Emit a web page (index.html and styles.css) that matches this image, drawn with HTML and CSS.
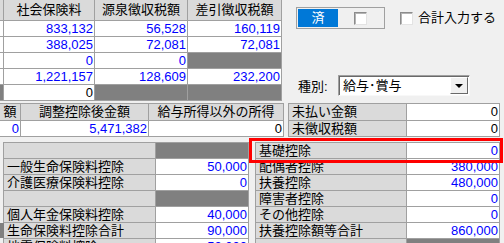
FILE: index.html
```html
<!DOCTYPE html>
<html lang="ja">
<head>
    <meta charset="UTF-8">
    <meta name="viewport" content="width=device-width, initial-scale=1.0">
    <title>源泉徴収</title>
    <link rel="stylesheet" href="styles.css">
</head>
<body>
    <div class="band">
        <div class="grid grid-tax">
            <div class="cell head"></div>
            <div class="cell head">社会保険料</div>
            <div class="cell head">源泉徴収税額</div>
            <div class="cell head">差引徴収税額</div>

            <div class="cell"></div>
            <div class="cell num">833,132</div>
            <div class="cell num">56,528</div>
            <div class="cell num">160,119</div>

            <div class="cell"></div>
            <div class="cell num">388,025</div>
            <div class="cell num">72,081</div>
            <div class="cell num">72,081</div>

            <div class="cell"></div>
            <div class="cell num">0</div>
            <div class="cell num">0</div>
            <div class="cell dark"></div>

            <div class="cell"></div>
            <div class="cell num">1,221,157</div>
            <div class="cell num">128,609</div>
            <div class="cell num">232,200</div>

            <div class="cell dark"></div>
            <div class="cell num black">0</div>
            <div class="cell dark"></div>
            <div class="cell dark"></div>
        </div>

        <div class="side">
            <div class="side-top">
                <div class="toggle">
                    <span class="toggle-on">済</span>
                    <span class="toggle-off"><span class="check"></span></span>
                </div>
                <label class="check-label"><span class="check"></span>合計入力する</label>
            </div>
            <div class="kind-row">
                <span class="kind-label">種別:</span>
                <div class="combo">
                    <span class="combo-text">給与･賞与</span>
                    <span class="combo-btn"><span class="arrow"></span></span>
                </div>
            </div>
        </div>
    </div>

    <div class="band band-mid">
        <div class="grid grid-adjust">
            <div class="cell head">額</div>
            <div class="cell head">調整控除後金額</div>
            <div class="cell head">給与所得以外の所得</div>

            <div class="cell num">0</div>
            <div class="cell num">5,471,382</div>
            <div class="cell num black">0</div>
        </div>

        <div class="grid grid-unpaid">
            <div class="cell label">未払い金額</div>
            <div class="cell num black">0</div>
            <div class="cell label">未徴収税額</div>
            <div class="cell num black">0</div>
        </div>
    </div>

    <div class="band band-low">
        <div class="grid grid-life">
            <div class="cell label"></div>
            <div class="cell dark"></div>
            <div class="cell label">一般生命保険料控除</div>
            <div class="cell num">50,000</div>
            <div class="cell label">介護医療保険料控除</div>
            <div class="cell num">0</div>
            <div class="cell label"></div>
            <div class="cell dark"></div>
            <div class="cell label">個人年金保険料控除</div>
            <div class="cell num">40,000</div>
            <div class="cell label marked">生命保険料控除合計</div>
            <div class="cell num">90,000</div>
            <div class="cell label">地震保険料控除</div>
            <div class="cell num">50,000</div>
        </div>

        <div class="grid grid-deduct">
            <div class="cell label">基礎控除</div>
            <div class="cell num">0</div>
            <div class="cell label">配偶者控除</div>
            <div class="cell num">380,000</div>
            <div class="cell label">扶養控除</div>
            <div class="cell num">480,000</div>
            <div class="cell label">障害者控除</div>
            <div class="cell num">0</div>
            <div class="cell label">その他控除</div>
            <div class="cell num">0</div>
            <div class="cell label">扶養控除額等合計</div>
            <div class="cell num">860,000</div>
            <div class="cell label"></div>
            <div class="cell dark"></div>
        </div>

        <div class="highlight"></div>
    </div>
</body>
</html>
```

FILE: styles.css
```css
* {
    margin: 0;
    padding: 0;
    box-sizing: border-box;
}

body {
    background: #f0f0f0;
    color: #000;
    font-family: "Liberation Sans", "Noto Sans CJK JP", sans-serif;
    font-size: 13px;
    width: 504px;
    height: 243px;
    overflow: hidden;
}

.band {
    display: flex;
    align-items: flex-start;
}

.grid {
    display: grid;
    gap: 1px;
    background: #a0a0a0;
}

.cell {
    background: #fff;
    line-height: 15px;
    padding: 0 1px;
    white-space: nowrap;
    overflow: hidden;
}

.head {
    background: #dadada;
    text-align: center;
}

.label {
    background: #dadada;
    padding-left: 3px;
}

.num {
    text-align: right;
    color: #0000ff;
}

.black {
    color: #000;
}

.dark {
    background: #808080;
}

/* top table */
.grid-tax {
    grid-template-columns: 3px 90px 92px 93px;
    grid-template-rows: 20px repeat(5, 15px);
    padding: 0 1px 1px 0;
}

.grid-tax .head {
    line-height: 20px;
}

/* right side controls */
.side {
    margin-left: 14px;
    padding-top: 7px;
}

.side-top {
    display: flex;
    align-items: center;
}

.toggle {
    display: flex;
    width: 89px;
    height: 22px;
    padding: 1px;
    border: 1px solid #a0a0a0;
    background: #f0f0f0;
}

.toggle-on {
    width: 40px;
    background: #0078d7;
    color: #fff;
    text-align: center;
    line-height: 18px;
}

.toggle-off {
    flex: 1;
    display: flex;
    align-items: center;
    justify-content: center;
}

.check {
    display: inline-block;
    width: 13px;
    height: 13px;
    background: #fff;
    border: 1px solid;
    border-color: #8c8c8c #e3e3e3 #e3e3e3 #8c8c8c;
    box-shadow: inset 1px 1px 0 #b4b4b4;
}

.check-label {
    display: flex;
    align-items: center;
    gap: 5px;
    margin-left: 15px;
    line-height: 16px;
}

.kind-row {
    display: flex;
    align-items: center;
    margin-top: 46px;
}

.kind-label {
    width: 42px;
    padding-left: 2px;
}

.combo {
    display: flex;
    align-items: center;
    justify-content: space-between;
    width: 132px;
    height: 21px;
    background: #fff;
    border: 1px solid;
    border-color: #a0a0a0 #f8f8f8 #f8f8f8 #a0a0a0;
    box-shadow: inset 1px 1px 0 #696969;
}

.combo-text {
    padding-left: 4px;
    line-height: 17px;
}

.combo-btn {
    display: flex;
    align-items: center;
    justify-content: center;
    width: 18px;
    height: 17px;
    margin-right: 1px;
    background: #f0f0f0;
    border: 1px solid;
    border-color: #fff #696969 #696969 #fff;
}

.arrow {
    width: 0;
    height: 0;
    border-left: 4px solid transparent;
    border-right: 4px solid transparent;
    border-top: 4px solid #000;
    margin-top: 1px;
}

/* middle tables */
.band-mid {
    margin-top: 2px;
}

.grid-adjust {
    grid-template-columns: 20px 127px 134px;
    grid-template-rows: 16px 15px;
    padding: 1px 1px 1px 0;
}

.grid-adjust .head {
    line-height: 16px;
    padding: 0;
}

.grid-unpaid {
    grid-template-columns: 117px 92px;
    grid-template-rows: 16px 15px;
    padding: 1px;
    margin-left: 4px;
}

.grid-unpaid .cell {
    line-height: 16px;
}

/* lower tables */
.band-low {
    position: relative;
    margin-top: 5px;
}

.grid-life {
    grid-template-columns: 151px 92px;
    grid-auto-rows: 15px;
    padding: 1px;
    margin-left: 3px;
}

.grid-deduct {
    grid-template-columns: 150px 92px;
    grid-auto-rows: 15px;
    padding: 1px;
    margin-left: 6px;
}

.marked {
    box-shadow: -4px 0 0 #808080;
}

.highlight {
    position: absolute;
    left: 249px;
    top: -4px;
    width: 254px;
    height: 25px;
    border: 3px solid #ff0000;
}
```
